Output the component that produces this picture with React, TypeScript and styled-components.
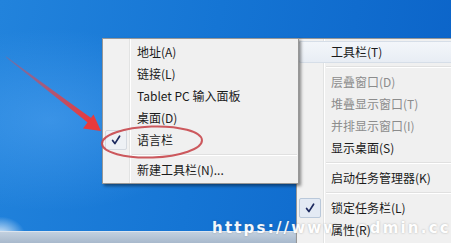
import React from 'react';
import styled, { createGlobalStyle } from 'styled-components';

const GlobalStyle = createGlobalStyle`
	html, body {
		margin: 0;
		padding: 0;
		overflow: hidden;
		background: #0b62c7;
	}
	* {
		box-sizing: border-box;
	}
`;

const Desktop = styled.div`
	position: relative;
	width: 451px;
	height: 243px;
	overflow: hidden;
	display: flex;
	flex-direction: column;
	font-family: 'Noto Sans CJK SC', 'Noto Sans', sans-serif;
	background:
		radial-gradient(ellipse 34px 26px at 0 236px, rgba(255, 255, 255, 0.9), rgba(255, 255, 255, 0) 75%),
		radial-gradient(ellipse 230px 130px at 50px 120px, rgba(110, 185, 255, 0.35), rgba(110, 185, 255, 0) 70%),
		linear-gradient(100deg, #2283dc 0%, #1575d4 45%, #0b63c8 100%);
`;

const Wallpaper = styled.div`
	flex: 1;
`;

const Taskbar = styled.div`
	height: 12px;
	border-top: 1px solid #dbe4ee;
	background: linear-gradient(#c2d0df, #a8b9cc);
`;

const Menu = styled.div<{ $left: number; $top: number; $width: number; $front?: boolean }>`
	position: absolute;
	left: ${(p) => p.$left}px;
	top: ${(p) => p.$top}px;
	width: ${(p) => p.$width}px;
	padding: 2px 1px;
	border: 1px solid #979797;
	background: linear-gradient(
		to right,
		#f1f1f1 0,
		#f1f1f1 26px,
		#e2e3e3 26px,
		#e2e3e3 27px,
		#ffffff 27px,
		#ffffff 28px,
		#f0f0f0 28px
	);
	box-shadow: ${(p) => (p.$front ? '2px 2px 3px rgba(0, 0, 0, 0.45)' : '1px 1px 2px rgba(0, 0, 0, 0.3)')};
`;

const Item = styled.div<{ $hover?: boolean }>`
	display: flex;
	align-items: center;
	height: 22px;
	border: 1px solid ${(p) => (p.$hover ? '#d6dee8' : 'transparent')};
	border-radius: 3px;
	background: ${(p) => (p.$hover ? 'linear-gradient(#f3f6fa, #e8edf4)' : 'transparent')};
`;

const CheckCell = styled.div<{ $checked?: boolean; $faint?: boolean }>`
	width: 22px;
	height: 20px;
	display: flex;
	align-items: center;
	justify-content: center;
	border-radius: 2px;
	border: 1px solid
		${(p) => (!p.$checked ? 'transparent' : p.$faint ? '#d4d9e0' : '#b9c8da')};
	background: ${(p) => (!p.$checked ? 'transparent' : p.$faint ? '#eef1f5' : '#e3eaf4')};
`;

const Label = styled.span<{ $disabled?: boolean }>`
	position: relative;
	z-index: 3;
	margin-left: 10px;
	font-size: 12px;
	line-height: 16px;
	white-space: nowrap;
	color: ${(p) => (p.$disabled ? '#8c8c8c' : '#1b1b1b')};
`;

const Separator = styled.div`
	height: 8px;
	margin-left: 28px;
	display: flex;
	flex-direction: column;
	justify-content: center;
	&::before {
		content: '';
		height: 1px;
		background: #e0e0e0;
	}
	&::after {
		content: '';
		height: 1px;
		background: #ffffff;
	}
`;

const Overlay = styled.svg`
	position: absolute;
	left: 0;
	top: 0;
	z-index: 4;
	pointer-events: none;
`;

const Watermark = styled.div`
	position: absolute;
	left: 212px;
	top: 219px;
	z-index: 2;
	display: flex;
	gap: 18px;
	font-family: 'DejaVu Sans', sans-serif;
	font-weight: bold;
	font-size: 15px;
	line-height: 18px;
	letter-spacing: 2.2px;
	color: #ffffff;
	opacity: 0.95;
	text-shadow: 0 0 2px rgba(90, 90, 90, 0.45);
	white-space: pre;
`;

const CheckMark = () => (
	<svg width="10" height="10" viewBox="0 0 10 10">
		<path d="M1.6 5.4 L3.9 8.6 L8.6 1.2" fill="none" stroke="#1d2a5f" strokeWidth="1.7" strokeLinecap="round" strokeLinejoin="round" />
	</svg>
);

type Entry = { text?: string; sep?: boolean; checked?: boolean; disabled?: boolean; hover?: boolean };

const toolbarItems: Entry[] = [
	{ text: '地址(A)' },
	{ text: '链接(L)' },
	{ text: 'Tablet PC 输入面板' },
	{ text: '桌面(D)' },
	{ text: '语言栏', checked: true },
	{ sep: true },
	{ text: '新建工具栏(N)...' },
];

const taskbarItems: Entry[] = [
	{ text: '工具栏(T)', hover: true },
	{ sep: true },
	{ text: '层叠窗口(D)', disabled: true },
	{ text: '堆叠显示窗口(T)', disabled: true },
	{ text: '并排显示窗口(I)', disabled: true },
	{ text: '显示桌面(S)' },
	{ sep: true },
	{ text: '启动任务管理器(K)' },
	{ sep: true },
	{ text: '锁定任务栏(L)', checked: true },
	{ text: '属性(R)' },
];

const MenuItems = ({ items, faint }: { items: Entry[]; faint?: boolean }) => (
	<>
		{items.map((item, i) =>
			item.sep ? (
				<Separator key={i} />
			) : (
				<Item key={i} $hover={item.hover}>
					<CheckCell $checked={item.checked} $faint={faint}>
						{item.checked && <CheckMark />}
					</CheckCell>
					<Label $disabled={item.disabled}>{item.text}</Label>
				</Item>
			)
		)}
	</>
);

const App = () => (
	<Desktop>
		<GlobalStyle />
		<Wallpaper />
		<Taskbar />
		<Menu $left={296} $top={38} $width={180}>
			<MenuItems items={taskbarItems} />
		</Menu>
		<Menu $left={102} $top={38} $width={197} $front>
			<MenuItems items={toolbarItems} faint />
		</Menu>
		<Watermark>
			<span>https://www</span>
			<span>admin.cc</span>
		</Watermark>
		<Overlay width="451" height="243" viewBox="0 0 451 243">
			<defs>
				<linearGradient id="shaft" x1="6" y1="57" x2="90" y2="121" gradientUnits="userSpaceOnUse">
					<stop offset="0" stopColor="#e4464a" stopOpacity="0.35" />
					<stop offset="1" stopColor="#e8393c" stopOpacity="1" />
				</linearGradient>
			</defs>
			<polygon points="5.5,56 6.8,58 89.5,124 92.5,119" fill="url(#shaft)" />
			<polygon points="101,131 83,128.5 93.5,114.5" fill="#ea3a3a" />
			<ellipse
				cx="152"
				cy="142"
				rx="50"
				ry="15.5"
				fill="none"
				stroke="#c8474c"
				strokeWidth="2"
				opacity="0.9"
				transform="rotate(-2 152 142)"
			/>
		</Overlay>
	</Desktop>
);

export default App;
